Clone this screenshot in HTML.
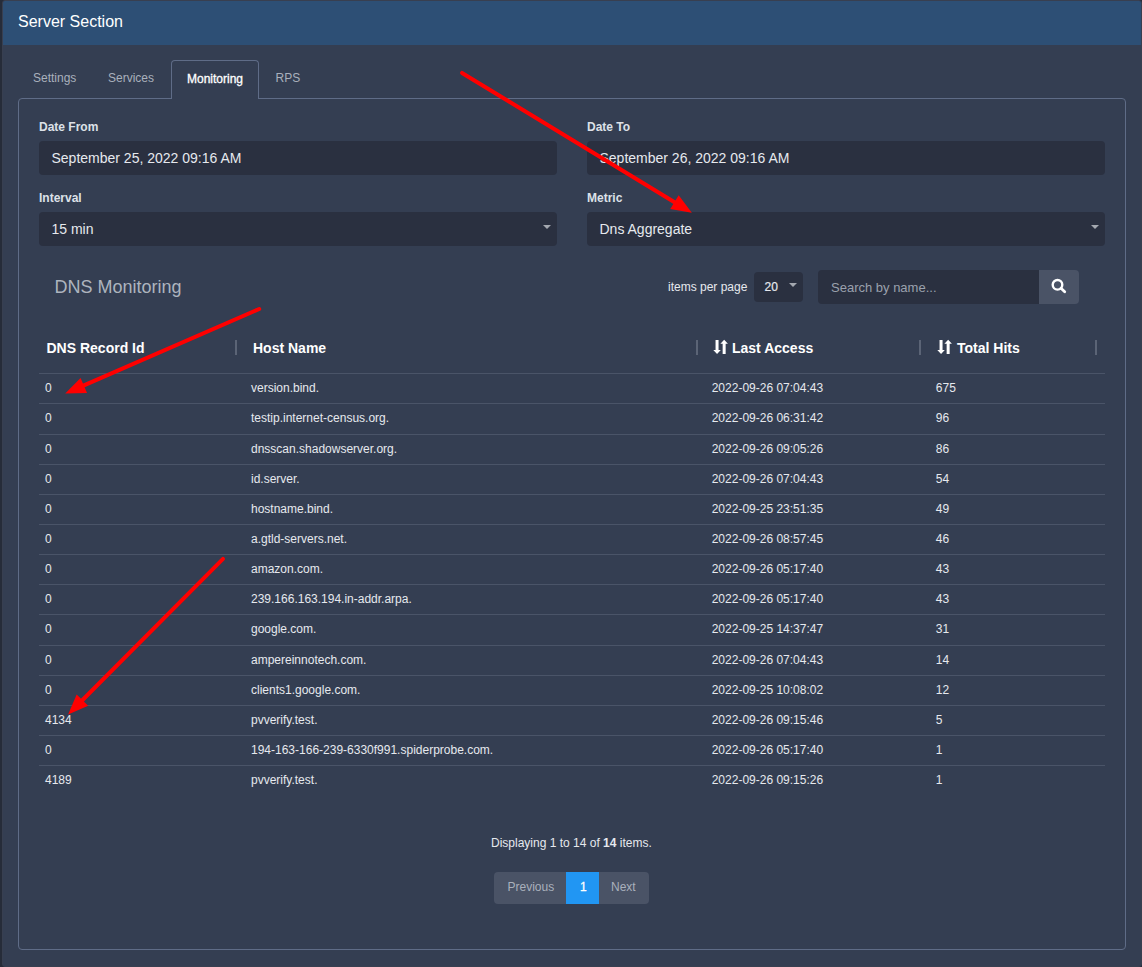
<!DOCTYPE html><html><head><meta charset="utf-8"><style>
html,body{margin:0;padding:0;}
body{width:1142px;height:967px;position:relative;overflow:hidden;background:#262c39;font-family:"Liberation Sans",sans-serif;}
.t{position:absolute;white-space:nowrap;}
.r{position:absolute;}
</style></head><body>
<div class="r" style="left:2px;top:0px;width:1140px;height:967px;background:#343e52;box-sizing:border-box;border:1px solid #383f50;border-radius:3px;"></div>
<div class="r" style="left:3px;top:1px;width:1138px;height:44px;background:#2d4f75;border-radius:2px 2px 0 0;"></div>
<div class="t" style="left:18px;top:14.00px;font-size:16px;line-height:16px;color:#ffffff;">Server Section</div>
<div class="r" style="left:18px;top:98px;width:1108px;height:852px;background:transparent;box-sizing:border-box;border:1px solid #5f6c87;border-radius:4px;"></div>
<div class="r" style="left:171px;top:60px;width:88px;height:39px;background:#343e52;box-sizing:border-box;border:1px solid #5f6c87;border-bottom:none;border-radius:4px 4px 0 0;"></div>
<div class="t" style="left:33px;top:72.00px;font-size:12px;line-height:12px;color:#a9b0bc;">Settings</div>
<div class="t" style="left:108px;top:72.00px;font-size:12px;line-height:12px;color:#a9b0bc;">Services</div>
<div class="t" style="left:187px;top:73.00px;font-size:12px;line-height:12px;color:#ffffff;-webkit-text-stroke:0.3px #fff;">Monitoring</div>
<div class="t" style="left:275.5px;top:72.00px;font-size:12px;line-height:12px;color:#a9b0bc;">RPS</div>
<div class="t" style="left:39px;top:121.00px;font-size:12px;line-height:12px;color:#dde1e8;font-weight:bold;">Date From</div>
<div class="t" style="left:587px;top:121.00px;font-size:12px;line-height:12px;color:#dde1e8;font-weight:bold;">Date To</div>
<div class="r" style="left:39px;top:141px;width:518px;height:34px;background:#2a3040;border-radius:4px;"></div>
<div class="r" style="left:587px;top:141px;width:518px;height:34px;background:#2a3040;border-radius:4px;"></div>
<div class="t" style="left:51.5px;top:151.00px;font-size:14px;line-height:14px;color:#e6e9ee;">September 25, 2022 09:16 AM</div>
<div class="t" style="left:599.5px;top:151.00px;font-size:14px;line-height:14px;color:#e6e9ee;">September 26, 2022 09:16 AM</div>
<div class="t" style="left:39px;top:192.00px;font-size:12px;line-height:12px;color:#dde1e8;font-weight:bold;">Interval</div>
<div class="t" style="left:587px;top:192.00px;font-size:12px;line-height:12px;color:#dde1e8;font-weight:bold;">Metric</div>
<div class="r" style="left:39px;top:212px;width:518px;height:34px;background:#2a3040;border-radius:4px;"></div>
<div class="r" style="left:587px;top:212px;width:518px;height:34px;background:#2a3040;border-radius:4px;"></div>
<div class="t" style="left:51.5px;top:222.00px;font-size:14px;line-height:14px;color:#e6e9ee;">15 min</div>
<div class="t" style="left:599.5px;top:222.00px;font-size:14px;line-height:14px;color:#e6e9ee;">Dns Aggregate</div>
<svg class="r" style="left:543px;top:225px" width="8" height="4" viewBox="0 0 8 4"><path d="M0 0H8L4 4Z" fill="#a4a8b0"/></svg>
<svg class="r" style="left:1091px;top:225px" width="8" height="4" viewBox="0 0 8 4"><path d="M0 0H8L4 4Z" fill="#a4a8b0"/></svg>
<div class="t" style="left:54.5px;top:278.00px;font-size:18px;line-height:18px;color:#adb4be;">DNS Monitoring</div>
<div class="t" style="left:668px;top:281.00px;font-size:12px;line-height:12px;color:#e6e9ee;">items per page</div>
<div class="r" style="left:754px;top:272px;width:49px;height:30px;background:#2a3040;border-radius:4px;"></div>
<div class="t" style="left:764.5px;top:281.00px;font-size:12px;line-height:12px;color:#e6e9ee;-webkit-text-stroke:0.2px #e6e9ee;">20</div>
<svg class="r" style="left:789px;top:283px" width="8" height="4" viewBox="0 0 8 4"><path d="M0 0H8L4 4Z" fill="#a4a8b0"/></svg>
<div class="r" style="left:818px;top:270px;width:221px;height:34px;background:#2a3040;border-radius:4px 0 0 4px;"></div>
<div class="r" style="left:1039px;top:270px;width:40px;height:34px;background:#4a5366;border-radius:0 4px 4px 0;"></div>
<div class="t" style="left:831px;top:281.00px;font-size:13px;line-height:13px;color:#9aa1ad;">Search by name...</div>
<svg class="r" style="left:1048px;top:276px" width="20" height="20" viewBox="0 0 20 20"><circle cx="9.5" cy="8.85" r="4.8" fill="none" stroke="#fff" stroke-width="2.4"/><path d="M13 12.3L16.7 15.8" stroke="#fff" stroke-width="2.8" stroke-linecap="round"/></svg>
<div class="r" style="left:235px;top:340px;width:2px;height:15px;background:#5b6476;"></div>
<div class="r" style="left:696px;top:340px;width:2px;height:15px;background:#5b6476;"></div>
<div class="r" style="left:919px;top:340px;width:2px;height:15px;background:#5b6476;"></div>
<div class="r" style="left:1095px;top:340px;width:2px;height:15px;background:#5b6476;"></div>
<div class="t" style="left:46.5px;top:341.00px;font-size:14px;line-height:14px;color:#ffffff;font-weight:bold;">DNS Record Id</div>
<div class="t" style="left:253px;top:341.00px;font-size:14px;line-height:14px;color:#ffffff;font-weight:bold;">Host Name</div>
<svg class="r" style="left:713px;top:340px;overflow:visible" width="16" height="15" viewBox="0 0 16 15"><path d="M2.55 0H5.55V10.1H7.8L4.05 14L0.3 10.1H2.55Z" fill="#fff"/><path d="M9.65 14H12.65V3.7H14.9L11.15 -0.2L7.4 3.7H9.65Z" fill="#fff"/></svg>
<div class="t" style="left:732px;top:341.00px;font-size:14px;line-height:14px;color:#ffffff;font-weight:bold;">Last Access</div>
<svg class="r" style="left:937px;top:340px;overflow:visible" width="16" height="15" viewBox="0 0 16 15"><path d="M2.55 0H5.55V10.1H7.8L4.05 14L0.3 10.1H2.55Z" fill="#fff"/><path d="M9.65 14H12.65V3.7H14.9L11.15 -0.2L7.4 3.7H9.65Z" fill="#fff"/></svg>
<div class="t" style="left:957px;top:341.00px;font-size:14px;line-height:14px;color:#ffffff;font-weight:bold;">Total Hits</div>
<div class="r" style="left:39px;top:373px;width:1066px;height:1px;background:#4a5468;"></div>
<div class="t" style="left:45px;top:382.00px;font-size:12px;line-height:12px;color:#e6e9ee;">0</div>
<div class="t" style="left:251px;top:382.00px;font-size:12px;line-height:12px;color:#e6e9ee;">version.bind.</div>
<div class="t" style="left:711.7px;top:382.00px;font-size:12px;line-height:12px;color:#e6e9ee;">2022-09-26 07:04:43</div>
<div class="t" style="left:935.8px;top:382.00px;font-size:12px;line-height:12px;color:#e6e9ee;">675</div>
<div class="r" style="left:39px;top:403px;width:1066px;height:1px;background:#4a5468;"></div>
<div class="t" style="left:45px;top:412.00px;font-size:12px;line-height:12px;color:#e6e9ee;">0</div>
<div class="t" style="left:251px;top:412.00px;font-size:12px;line-height:12px;color:#e6e9ee;">testip.internet-census.org.</div>
<div class="t" style="left:711.7px;top:412.00px;font-size:12px;line-height:12px;color:#e6e9ee;">2022-09-26 06:31:42</div>
<div class="t" style="left:935.8px;top:412.00px;font-size:12px;line-height:12px;color:#e6e9ee;">96</div>
<div class="r" style="left:39px;top:434px;width:1066px;height:1px;background:#4a5468;"></div>
<div class="t" style="left:45px;top:443.00px;font-size:12px;line-height:12px;color:#e6e9ee;">0</div>
<div class="t" style="left:251px;top:443.00px;font-size:12px;line-height:12px;color:#e6e9ee;">dnsscan.shadowserver.org.</div>
<div class="t" style="left:711.7px;top:443.00px;font-size:12px;line-height:12px;color:#e6e9ee;">2022-09-26 09:05:26</div>
<div class="t" style="left:935.8px;top:443.00px;font-size:12px;line-height:12px;color:#e6e9ee;">86</div>
<div class="r" style="left:39px;top:464px;width:1066px;height:1px;background:#4a5468;"></div>
<div class="t" style="left:45px;top:473.00px;font-size:12px;line-height:12px;color:#e6e9ee;">0</div>
<div class="t" style="left:251px;top:473.00px;font-size:12px;line-height:12px;color:#e6e9ee;">id.server.</div>
<div class="t" style="left:711.7px;top:473.00px;font-size:12px;line-height:12px;color:#e6e9ee;">2022-09-26 07:04:43</div>
<div class="t" style="left:935.8px;top:473.00px;font-size:12px;line-height:12px;color:#e6e9ee;">54</div>
<div class="r" style="left:39px;top:494px;width:1066px;height:1px;background:#4a5468;"></div>
<div class="t" style="left:45px;top:503.00px;font-size:12px;line-height:12px;color:#e6e9ee;">0</div>
<div class="t" style="left:251px;top:503.00px;font-size:12px;line-height:12px;color:#e6e9ee;">hostname.bind.</div>
<div class="t" style="left:711.7px;top:503.00px;font-size:12px;line-height:12px;color:#e6e9ee;">2022-09-25 23:51:35</div>
<div class="t" style="left:935.8px;top:503.00px;font-size:12px;line-height:12px;color:#e6e9ee;">49</div>
<div class="r" style="left:39px;top:524px;width:1066px;height:1px;background:#4a5468;"></div>
<div class="t" style="left:45px;top:533.00px;font-size:12px;line-height:12px;color:#e6e9ee;">0</div>
<div class="t" style="left:251px;top:533.00px;font-size:12px;line-height:12px;color:#e6e9ee;">a.gtld-servers.net.</div>
<div class="t" style="left:711.7px;top:533.00px;font-size:12px;line-height:12px;color:#e6e9ee;">2022-09-26 08:57:45</div>
<div class="t" style="left:935.8px;top:533.00px;font-size:12px;line-height:12px;color:#e6e9ee;">46</div>
<div class="r" style="left:39px;top:554px;width:1066px;height:1px;background:#4a5468;"></div>
<div class="t" style="left:45px;top:563.00px;font-size:12px;line-height:12px;color:#e6e9ee;">0</div>
<div class="t" style="left:251px;top:563.00px;font-size:12px;line-height:12px;color:#e6e9ee;">amazon.com.</div>
<div class="t" style="left:711.7px;top:563.00px;font-size:12px;line-height:12px;color:#e6e9ee;">2022-09-26 05:17:40</div>
<div class="t" style="left:935.8px;top:563.00px;font-size:12px;line-height:12px;color:#e6e9ee;">43</div>
<div class="r" style="left:39px;top:584px;width:1066px;height:1px;background:#4a5468;"></div>
<div class="t" style="left:45px;top:593.00px;font-size:12px;line-height:12px;color:#e6e9ee;">0</div>
<div class="t" style="left:251px;top:593.00px;font-size:12px;line-height:12px;color:#e6e9ee;">239.166.163.194.in-addr.arpa.</div>
<div class="t" style="left:711.7px;top:593.00px;font-size:12px;line-height:12px;color:#e6e9ee;">2022-09-26 05:17:40</div>
<div class="t" style="left:935.8px;top:593.00px;font-size:12px;line-height:12px;color:#e6e9ee;">43</div>
<div class="r" style="left:39px;top:614px;width:1066px;height:1px;background:#4a5468;"></div>
<div class="t" style="left:45px;top:623.00px;font-size:12px;line-height:12px;color:#e6e9ee;">0</div>
<div class="t" style="left:251px;top:623.00px;font-size:12px;line-height:12px;color:#e6e9ee;">google.com.</div>
<div class="t" style="left:711.7px;top:623.00px;font-size:12px;line-height:12px;color:#e6e9ee;">2022-09-25 14:37:47</div>
<div class="t" style="left:935.8px;top:623.00px;font-size:12px;line-height:12px;color:#e6e9ee;">31</div>
<div class="r" style="left:39px;top:645px;width:1066px;height:1px;background:#4a5468;"></div>
<div class="t" style="left:45px;top:654.00px;font-size:12px;line-height:12px;color:#e6e9ee;">0</div>
<div class="t" style="left:251px;top:654.00px;font-size:12px;line-height:12px;color:#e6e9ee;">ampereinnotech.com.</div>
<div class="t" style="left:711.7px;top:654.00px;font-size:12px;line-height:12px;color:#e6e9ee;">2022-09-26 07:04:43</div>
<div class="t" style="left:935.8px;top:654.00px;font-size:12px;line-height:12px;color:#e6e9ee;">14</div>
<div class="r" style="left:39px;top:675px;width:1066px;height:1px;background:#4a5468;"></div>
<div class="t" style="left:45px;top:684.00px;font-size:12px;line-height:12px;color:#e6e9ee;">0</div>
<div class="t" style="left:251px;top:684.00px;font-size:12px;line-height:12px;color:#e6e9ee;">clients1.google.com.</div>
<div class="t" style="left:711.7px;top:684.00px;font-size:12px;line-height:12px;color:#e6e9ee;">2022-09-25 10:08:02</div>
<div class="t" style="left:935.8px;top:684.00px;font-size:12px;line-height:12px;color:#e6e9ee;">12</div>
<div class="r" style="left:39px;top:705px;width:1066px;height:1px;background:#4a5468;"></div>
<div class="t" style="left:45px;top:714.00px;font-size:12px;line-height:12px;color:#e6e9ee;">4134</div>
<div class="t" style="left:251px;top:714.00px;font-size:12px;line-height:12px;color:#e6e9ee;">pvverify.test.</div>
<div class="t" style="left:711.7px;top:714.00px;font-size:12px;line-height:12px;color:#e6e9ee;">2022-09-26 09:15:46</div>
<div class="t" style="left:935.8px;top:714.00px;font-size:12px;line-height:12px;color:#e6e9ee;">5</div>
<div class="r" style="left:39px;top:735px;width:1066px;height:1px;background:#4a5468;"></div>
<div class="t" style="left:45px;top:744.00px;font-size:12px;line-height:12px;color:#e6e9ee;">0</div>
<div class="t" style="left:251px;top:744.00px;font-size:12px;line-height:12px;color:#e6e9ee;">194-163-166-239-6330f991.spiderprobe.com.</div>
<div class="t" style="left:711.7px;top:744.00px;font-size:12px;line-height:12px;color:#e6e9ee;">2022-09-26 05:17:40</div>
<div class="t" style="left:935.8px;top:744.00px;font-size:12px;line-height:12px;color:#e6e9ee;">1</div>
<div class="r" style="left:39px;top:765px;width:1066px;height:1px;background:#4a5468;"></div>
<div class="t" style="left:45px;top:774.00px;font-size:12px;line-height:12px;color:#e6e9ee;">4189</div>
<div class="t" style="left:251px;top:774.00px;font-size:12px;line-height:12px;color:#e6e9ee;">pvverify.test.</div>
<div class="t" style="left:711.7px;top:774.00px;font-size:12px;line-height:12px;color:#e6e9ee;">2022-09-26 09:15:26</div>
<div class="t" style="left:935.8px;top:774.00px;font-size:12px;line-height:12px;color:#e6e9ee;">1</div>
<div class="t" style="left:491px;top:837.00px;font-size:12px;line-height:12px;color:#e6e9ee;">Displaying 1 to 14 of <b>14</b> items.</div>
<div class="r" style="left:494px;top:872px;width:155px;height:32px;background:#4a5366;border-radius:4px;"></div>
<div class="r" style="left:566px;top:872px;width:33px;height:32px;background:#2196f3;"></div>
<div class="t" style="left:507.5px;top:881.00px;font-size:12px;line-height:12px;color:#a9b0bc;">Previous</div>
<div class="t" style="left:580px;top:881.00px;font-size:12px;line-height:12px;color:#ffffff;-webkit-text-stroke:0.3px #fff;">1</div>
<div class="t" style="left:611px;top:881.00px;font-size:12px;line-height:12px;color:#a9b0bc;">Next</div>
<svg class="r" style="left:0;top:0" width="1142" height="967" viewBox="0 0 1142 967"><path d="M462.05 72.96L677.02 203.71" stroke="#ff0000" stroke-width="4" stroke-linecap="round" fill="none"/><path d="M691.80 212.70L670.25 209.07L678.67 195.23Z" fill="#ff0000"/><path d="M259.20 309.00L81.06 386.68" stroke="#ff0000" stroke-width="4" stroke-linecap="round" fill="none"/><path d="M65.20 393.60L80.57 378.06L87.05 392.91Z" fill="#ff0000"/><path d="M223.00 558.80L80.30 702.24" stroke="#ff0000" stroke-width="4" stroke-linecap="round" fill="none"/><path d="M68.10 714.50L76.67 694.40L88.16 705.82Z" fill="#ff0000"/></svg>
</body></html>
